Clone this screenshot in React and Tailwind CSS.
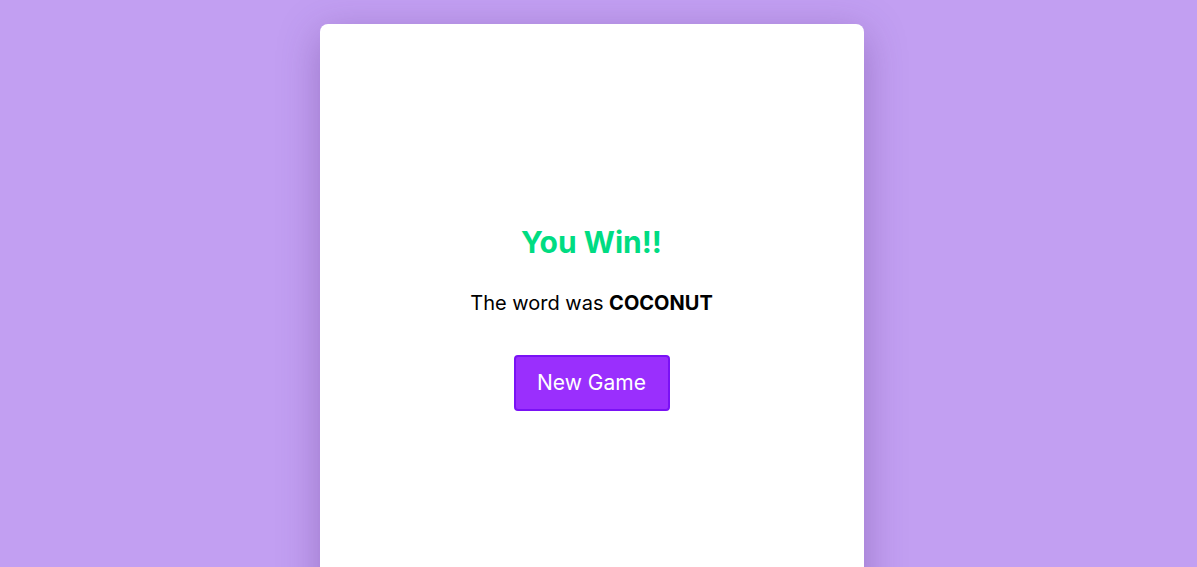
export default function App() {
  return (
    <div className="min-h-[567px] h-[567px] overflow-hidden bg-[#c29ff2] flex justify-center pt-6 pr-[14px]" style={{ fontFamily: "Inter, 'Open Sans', sans-serif" }}>
      <div className="w-[544px] h-[590px] shrink-0 bg-white rounded-lg shadow-[0_10px_40px_rgba(80,40,120,0.35)] flex flex-col items-center justify-center">
        <h1 className="text-[30px] font-bold text-[#00dc82] leading-none">You Win!!</h1>
        <p className="mt-[36px] text-[20px] text-black leading-none">
          The word was <span className="font-bold">COCONUT</span>
        </p>
        <button className="mt-[42px] w-[156px] h-[56px] bg-[#9a2ffd] border-2 border-[#7a12f5] rounded-[4px] text-white text-[21px]">
          New Game
        </button>
      </div>
    </div>
  );
}
